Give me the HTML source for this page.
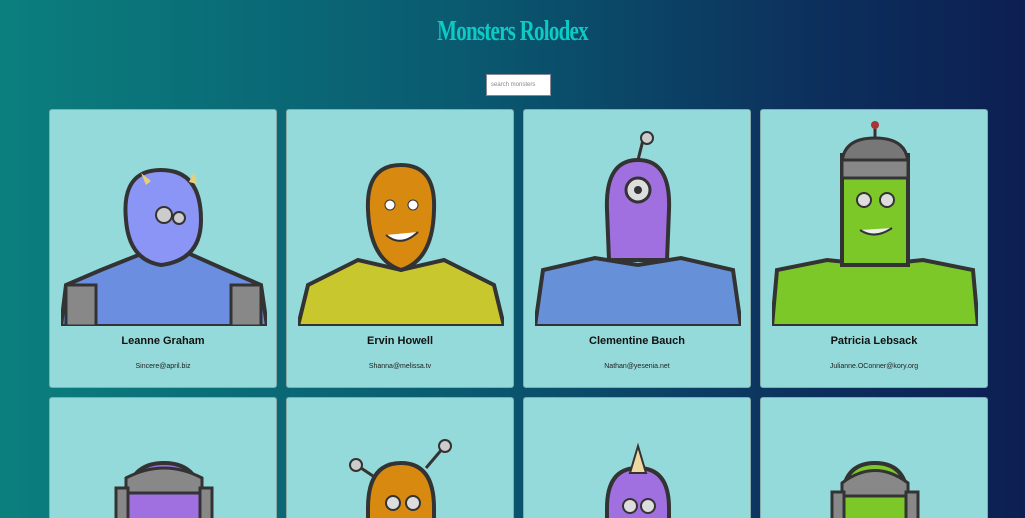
<!DOCTYPE html>
<html style="width:1025px;height:518px;overflow:hidden"><head><meta charset="utf-8"><style>
*{box-sizing:border-box;margin:0;padding:0}
body{width:1025px;height:518px;overflow:hidden;position:relative;background:linear-gradient(to right,#0b7f7e,#0a5a70 45%,#0c2f5c 80%,#0d1f52);font-family:"Liberation Sans",sans-serif}
h1{position:absolute;top:16px;width:100%;text-align:center;font-family:"Liberation Serif",serif;font-weight:bold;font-size:28px;color:#0ccac4;letter-spacing:-1px;transform:scaleX(.75)}
.search{position:absolute;left:486px;top:74px;width:65px;height:22px;background:#fff;border:1px solid #889;font-size:6px;color:#888;padding:7px 4px}
.card{position:absolute;width:228px;height:279px;background:#95dada;border:1px solid #8aa;border-radius:3px}
.card svg{position:absolute;left:11px;top:10px}
.card h2{position:absolute;top:225px;width:100%;text-align:center;font-size:11px;font-weight:bold;color:#111}
.card p{position:absolute;top:253px;width:100%;text-align:center;font-size:7px;color:#222}
</style></head><body>
<h1>Monsters Rolodex</h1>
<div class="search">search monsters</div>

<div class="card" style="left:49px;top:109px"><svg width="206" height="206" viewBox="0 0 206 206">
<path d="M0 206 L5 165 L40 150 L90 130 L120 130 L165 150 L200 165 L206 206Z" fill="#6b8ee0" stroke="#333" stroke-width="4"/>
<rect x="5" y="165" width="30" height="41" fill="#888" stroke="#333" stroke-width="3"/><rect x="170" y="165" width="30" height="41" fill="#888" stroke="#333" stroke-width="3"/>
<path d="M65 100 Q60 50 100 50 Q140 50 140 100 Q140 140 100 145 Q68 140 65 100Z" fill="#8a95f5" stroke="#333" stroke-width="4"/>
<circle cx="103" cy="95" r="8" fill="#ccc" stroke="#333" stroke-width="2"/><circle cx="118" cy="98" r="6" fill="#ccc" stroke="#333" stroke-width="2"/>
<path d="M85 65 l-5-12 10 8z M128 62 l5-10 3 12z" fill="#e6cf7a"/></svg>
<h2>Leanne Graham</h2><p>Sincere@april.biz</p></div>

<div class="card" style="left:286px;top:109px"><svg width="206" height="206" viewBox="0 0 206 206">
<path d="M0 206 L10 165 L60 140 L103 150 L146 140 L196 165 L206 206Z" fill="#c8c82e" stroke="#333" stroke-width="4"/>
<path d="M70 90 Q68 45 103 45 Q138 45 136 90 Q135 140 103 150 Q72 140 70 90Z" fill="#d88a10" stroke="#333" stroke-width="4"/>
<circle cx="92" cy="85" r="5" fill="#fff" stroke="#333"/><circle cx="115" cy="85" r="5" fill="#fff" stroke="#333"/>
<path d="M88 115 Q103 128 120 112" fill="#fff" stroke="#333" stroke-width="2"/></svg>
<h2>Ervin Howell</h2><p>Shanna@melissa.tv</p></div>

<div class="card" style="left:523px;top:109px"><svg width="206" height="206" viewBox="0 0 206 206">
<path d="M0 206 L8 150 L60 138 L103 145 L146 138 L198 150 L206 206Z" fill="#6690d8" stroke="#333" stroke-width="4"/>
<path d="M72 90 Q70 40 103 40 Q136 40 134 90 L132 140 L74 140Z" fill="#a070e0" stroke="#333" stroke-width="4"/>
<circle cx="103" cy="70" r="12" fill="#ddd" stroke="#333" stroke-width="3"/><circle cx="103" cy="70" r="4" fill="#333"/>
<path d="M103 40 L108 20" stroke="#333" stroke-width="3"/><circle cx="112" cy="18" r="6" fill="#ccc" stroke="#333" stroke-width="2"/></svg>
<h2>Clementine Bauch</h2><p>Nathan@yesenia.net</p></div>

<div class="card" style="left:760px;top:109px"><svg width="206" height="206" viewBox="0 0 206 206">
<path d="M0 206 L5 150 L55 140 L103 145 L151 140 L201 150 L206 206Z" fill="#7cc828" stroke="#333" stroke-width="4"/>
<rect x="70" y="35" width="66" height="110" fill="#7cc828" stroke="#333" stroke-width="4"/>
<path d="M70 45 Q70 18 103 18 Q136 18 136 45Z" fill="#777" stroke="#333" stroke-width="3"/>
<rect x="70" y="40" width="66" height="18" fill="#888" stroke="#333" stroke-width="3"/>
<line x1="103" y1="18" x2="103" y2="5" stroke="#333" stroke-width="3"/><circle cx="103" cy="5" r="4" fill="#a33"/>
<circle cx="92" cy="80" r="7" fill="#ddd" stroke="#333" stroke-width="2"/><circle cx="115" cy="80" r="7" fill="#ddd" stroke="#333" stroke-width="2"/>
<path d="M88 110 Q103 120 120 108" fill="#eee" stroke="#333" stroke-width="2"/></svg>
<h2>Patricia Lebsack</h2><p>Julianne.OConner@kory.org</p></div>

<div class="card" style="left:49px;top:397px"><svg width="206" height="206" viewBox="0 0 206 206">
<path d="M65 100 Q65 55 103 55 Q141 55 141 100 L141 140 L65 140Z" fill="#a070e0" stroke="#333" stroke-width="4"/>
<path d="M65 70 Q103 50 141 70 L141 85 L65 85Z" fill="#888" stroke="#333" stroke-width="3"/>
<rect x="55" y="80" width="12" height="40" fill="#888" stroke="#333" stroke-width="3"/><rect x="139" y="80" width="12" height="40" fill="#888" stroke="#333" stroke-width="3"/></svg></div>

<div class="card" style="left:286px;top:397px"><svg width="206" height="206" viewBox="0 0 206 206">
<path d="M70 100 Q70 55 103 55 Q136 55 136 100 L136 140 L70 140Z" fill="#d88a10" stroke="#333" stroke-width="4"/>
<path d="M78 70 L60 58 M128 60 L145 40" stroke="#333" stroke-width="3"/><circle cx="58" cy="57" r="6" fill="#ccc" stroke="#333" stroke-width="2"/><circle cx="147" cy="38" r="6" fill="#ccc" stroke="#333" stroke-width="2"/>
<circle cx="95" cy="95" r="7" fill="#ddd" stroke="#333" stroke-width="2"/><circle cx="115" cy="95" r="7" fill="#ddd" stroke="#333" stroke-width="2"/></svg></div>

<div class="card" style="left:523px;top:397px"><svg width="206" height="206" viewBox="0 0 206 206">
<path d="M72 100 Q72 60 103 60 Q134 60 134 100 L134 140 L72 140Z" fill="#a070e0" stroke="#333" stroke-width="4"/>
<path d="M95 65 L103 38 L111 65Z" fill="#eed8a0" stroke="#333" stroke-width="2"/>
<circle cx="95" cy="98" r="7" fill="#ddd" stroke="#333" stroke-width="2"/><circle cx="113" cy="98" r="7" fill="#ddd" stroke="#333" stroke-width="2"/></svg></div>

<div class="card" style="left:760px;top:397px"><svg width="206" height="206" viewBox="0 0 206 206">
<path d="M70 95 Q70 55 103 55 Q136 55 136 95 L136 140 L70 140Z" fill="#7cc828" stroke="#333" stroke-width="4"/>
<path d="M70 75 Q103 50 136 75 L136 88 L70 88Z" fill="#888" stroke="#333" stroke-width="3"/>
<rect x="60" y="84" width="12" height="34" fill="#888" stroke="#333" stroke-width="3"/><rect x="134" y="84" width="12" height="34" fill="#888" stroke="#333" stroke-width="3"/></svg></div>
</body></html>
